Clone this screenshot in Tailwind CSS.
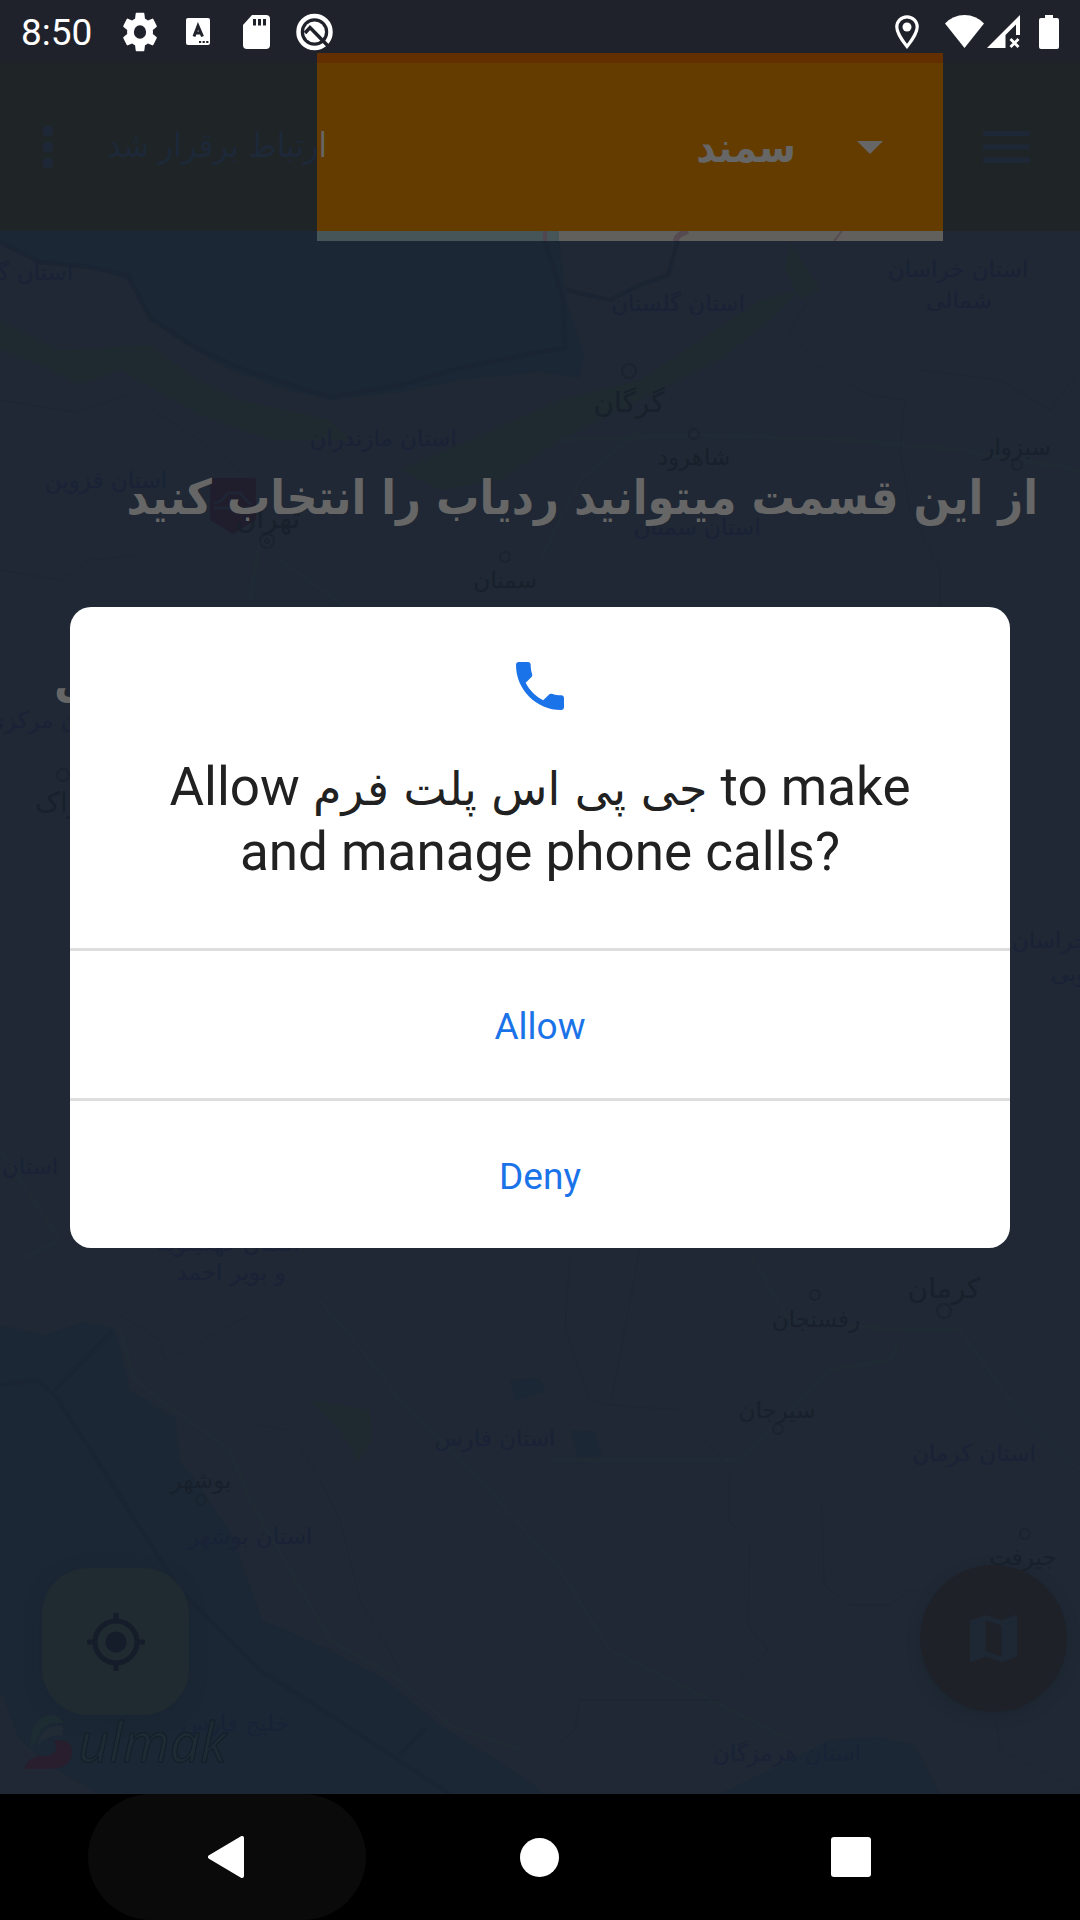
<!DOCTYPE html>
<html lang="fa">
<head>
<meta charset="utf-8">
<meta name="viewport" content="width=device-width, initial-scale=1">
<title>ردیاب</title>
<script src="https://cdn.jsdelivr.net/npm/@tailwindcss/browser@4"></script>
</head>
<body class="bg-black font-['Roboto','DejaVu_Sans',sans-serif]">
<div class="relative isolate flex min-h-screen flex-col overflow-hidden bg-[#1f2834]">

  <!-- Map -->
  <svg class="absolute inset-0 -z-10 h-full w-full" viewBox="0 0 1080 1920" preserveAspectRatio="xMidYMid slice" aria-hidden="true">
    <g fill="#1b2735">
      <path d="M0 231V242L40 262 95 268 128 280 150 320 190 347 230 370 280 388 330 400 400 392 460 380 540 372 580 378 584 355 566 300 558 231Z"/>
      <path d="M0 1325 45 1335 85 1322 115 1328 130 1390 175 1418 180 1460 230 1530 262 1620 330 1650 385 1680 440 1725 520 1775 545 1794H100L60 1772 20 1740 0 1690Z"/>
      <path d="M720 1794 760 1775 830 1740 880 1737 915 1745 940 1794Z"/>
      <path d="M570 1430 595 1432 602 1458 580 1465ZM510 1380 540 1378 545 1392 515 1400Z"/>
    </g>
    <g fill="#1e2930">
      <path d="M0 320 60 350 150 345 190 375 240 400 330 420 350 440 270 440 200 415 120 370 80 385 40 365 0 350Z"/>
      <path d="M400 470 470 440 560 400 640 380 700 340 760 300 800 290 770 320 720 360 640 400 560 440 500 480 440 490Z"/>
      <path d="M790 240 820 290 800 300 785 270ZM310 1400 370 1410 372 1440 358 1462 340 1430Z"/>
    </g>
    <g fill="none" stroke="#1a2432" stroke-width="4" stroke-linejoin="round">
      <path d="M0 242 40 262 90 267 128 275 150 318 200 350 250 372 330 397 400 385 460 368 540 352 565 348 563 300 542 231"/>
      <path d="M566 290 610 300 640 285 668 275 675 250 678 241"/>
      <path d="M0 1385 37 1380 55 1395 180 1590 260 1670 330 1715 450 1794M55 1390 112 1332M400 1755 425 1728"/>
    </g>
    <g fill="none" stroke="#202a35" stroke-width="5" stroke-linejoin="round">
      <path d="M120 1330 135 1380 180 1415 230 1450 250 1500 330 1640 400 1680 450 1725 520 1750"/>
      <path d="M320 1300 370 1360 400 1400 480 1480 560 1570 610 1650 690 1690 790 1740"/>
      <path d="M750 1255 790 1320 900 1330 960 1330 1010 1400 1080 1470M900 1340 890 1360 830 1370 770 1430 740 1460 550 1460"/>
      <path d="M560 440 700 435 850 440 960 450 1080 470M640 430 580 480 540 560"/>
      <path d="M260 540 250 600M280 560 350 610M0 1150 60 1240 20 1260"/>
    </g>
    <g fill="none" stroke="#1d2732" stroke-width="1">
      <path d="M0 400 75 412 130 395 200 440 240 470M0 570 60 580 90 560 140 555"/>
      <path d="M808 300 790 330 818 366 870 395 905 400 900 450 910 510 940 570 940 607M900 390 920 370 1000 380 1050 410 1080 370"/>
      <path d="M570 1255 565 1330 590 1400 610 1405 640 1250M610 1405 680 1410 730 1470 728 1520 750 1545 748 1625 768 1650 720 1700 580 1700 575 1730 550 1750"/>
      <path d="M120 1315 160 1340 165 1360 185 1350 250 1315M255 1425 290 1430 320 1480 340 1520 360 1600 400 1670"/>
      <path d="M822 1505 824 1585 850 1605 890 1605 910 1590 980 1600 1000 1750 1080 1790"/>
    </g>
    <g fill="none" stroke="#1a232e" stroke-width="2">
      <circle cx="267" cy="541" r="7"/><circle cx="267" cy="541" r="2"/>
      <circle cx="505" cy="557" r="5"/><circle cx="629" cy="371" r="7"/><circle cx="694" cy="434" r="5"/>
      <circle cx="1017" cy="465" r="5"/><circle cx="63" cy="775" r="6"/><circle cx="944" cy="1311" r="7"/>
      <circle cx="815" cy="1295" r="5"/><circle cx="778" cy="1429" r="5"/><circle cx="201" cy="1500" r="5"/><circle cx="1025" cy="1534" r="5"/>
    </g>
    <!-- Vehicle marker -->
    <path fill="#201d2d" d="M214 478H253Q256 478 256 481V520L247 525 233 534 219 525 210 520V481Q210 478 214 478Z"/>
    <path fill="none" stroke="#1e2534" stroke-width="3" d="M214 504 222 500 228 493H240L247 501 252 505M214 508H252"/>
    <g class="font-['DejaVu_Sans',sans-serif] text-[23px]" fill="#192236" text-anchor="middle" direction="rtl">
      <text x="17" y="280">استان گیلان</text>
      <text x="383" y="446">استان مازندران</text>
      <text x="106" y="488">استان قزوین</text>
      <text x="678" y="311">استان گلستان</text>
      <text x="958" y="277">استان خراسان</text>
      <text x="959" y="308">شمالی</text>
      <text x="697" y="535">استان سمنان</text>
      <text x="52" y="728">استان مرکزی</text>
      <text x="1050" y="948">خراسان</text>
      <text x="1080" y="981">جنوبی</text>
      <text x="30" y="1174">استان</text>
      <text x="228" y="1251">استان کهگیلویه</text>
      <text x="231" y="1280">و بویر احمد</text>
      <text x="974" y="1461">استان کرمان</text>
      <text x="495" y="1446">استان فارس</text>
      <text x="250" y="1544">استان بوشهر</text>
      <text x="235" y="1731">خلیج فارس</text>
      <text x="787" y="1761">استان هرمزگان</text>
    </g>
    <g class="font-['DejaVu_Sans',sans-serif] text-[23px]" fill="#17202b" text-anchor="middle" direction="rtl">
      <text class="text-[28px]" x="268" y="528">تهران</text>
      <text class="text-[28px]" x="629" y="412">گرگان</text>
      <text class="text-[28px]" x="944" y="1298">کرمان</text>
      <text x="505" y="588">سمنان</text>
      <text x="694" y="465">شاهرود</text>
      <text x="1017" y="455">سبزوار</text>
      <text class="text-[28px]" x="62" y="812">اراک</text>
      <text x="816" y="1327">رفسنجان</text>
      <text x="777" y="1418">سیرجان</text>
      <text x="201" y="1488">بوشهر</text>
      <text x="1023" y="1565">جیرفت</text>
    </g>
  </svg>

  <!-- Status bar -->
  <div class="flex h-[63px] shrink-0 items-center justify-between bg-[#1f222a] pr-[21px] pl-[21px] text-white" dir="ltr">
    <div class="flex items-center">
      <span class="w-[101px] pt-[2px] text-[37px] leading-[44px]">8:50</span>
      <svg class="h-[40px] w-[36px]" viewBox="2 2 20 20" preserveAspectRatio="none" fill="currentColor"><path d="M19.14 12.94a7.5 7.5 0 0 0 0-1.88l2.03-1.58a.5.5 0 0 0 .12-.61l-1.92-3.32a.49.49 0 0 0-.59-.22l-2.39.96a7 7 0 0 0-1.62-.94l-.36-2.54A.48.48 0 0 0 13.93 2.400h-3.84a.48.48 0 0 0-.48.41l-.36 2.540a7.200 7.200 0 0 0-1.620.94l-2.390-.96a.49.49 0 0 0-.59.22L2.740 8.870a.48.48 0 0 0 .12.610l2.030 1.580a7.500 7.500 0 0 0 0 1.880l-2.030 1.580a.5.5 0 0 0-.12.610l1.920 3.320c.12.22.37.29.59.22l2.390-.96c.5.380 1.030.7 1.620.94l.36 2.540c.05.240.24.410.48.410h3.840c.24 0 .44-.17.470-.410l.36-2.540a7 7 0 0 0 1.620-.94l2.390.96c.22.08.47 0 .59-.22l1.920-3.320a.5.5 0 0 0-.12-.61zM12 15.400a3.400 3.400 0 1 1 0-6.800 3.400 3.400 0 0 1 0 6.800z"/></svg>
      <svg class="ml-7 h-[28px] w-[25px]" viewBox="0 0 25 28"><rect width="24" height="27" rx="2" fill="#fff"/><path d="M8 18.500 12 8 16.500 18.500M9.500 15H15" fill="none" stroke="#1f222a" stroke-width="3"/><path d="M13 24H22.500" stroke="#1f222a" stroke-width="2.200" stroke-dasharray="2.200 1.400"/></svg>
      <svg class="ml-8 h-[34px] w-[27px]" viewBox="0 0 27 34"><path d="M9 0H23Q27 0 27 4V30Q27 34 23 34H4Q0 34 0 30V10Z" fill="#fff"/><path d="M11.500 4V10.500M16.500 4V10.500M21.500 4V10.500" stroke="#1f222a" stroke-width="3"/></svg>
      <svg class="ml-[26px] h-[38px] w-[37px]" viewBox="0 0 37 38"><circle cx="18.500" cy="19" r="16" fill="none" stroke="#fff" stroke-width="4.500"/><circle cx="18.500" cy="19" r="10.500" fill="#fff"/><path d="M9 20 14 14.500 35 36" fill="none" stroke="#1f222a" stroke-width="3.500"/></svg>
    </div>
    <div class="flex items-center">
      <svg class="h-[34px] w-[24px]" viewBox="0 0 24 34"><path d="M12 1.800C6 1.800 1.800 6.500 1.800 12 1.800 19 12 31.500 12 31.500S22.200 19 22.200 12C22.200 6.500 18 1.800 12 1.800Z" fill="none" stroke="#fff" stroke-width="3.200"/><circle cx="12" cy="12" r="4.500" fill="#fff"/></svg>
      <svg class="ml-[26px] h-[33px] w-[39px]" viewBox="0 0 39 33"><path d="M0 8.500Q8 0 19.500 0T39 8.500L19.500 33Z" fill="#fff"/></svg>
      <svg class="ml-[3px] h-[34px] w-[34px]" viewBox="0 0 34 34"><path d="M0 33 33 0V20H29V9.500L18.500 20V33Z" fill="#fff"/><path d="M23.500 24 31.500 32M31.500 24 23.500 32" stroke="#fff" stroke-width="2.800"/></svg>
      <svg class="ml-[18px] h-[34px] w-[20px]" viewBox="0 0 20 34"><path d="M6 0H14V3H18Q20 3 20 5V32Q20 34 18 34H2Q0 34 0 32V5Q0 3 2 3H6Z" fill="#fff"/></svg>
    </div>
  </div>

  <!-- App bar -->
  <header class="flex h-[168px] shrink-0 items-center bg-[#1f2427]" dir="ltr">
    <button type="button" aria-label="بیشتر" class="flex h-full w-[96px] items-center justify-center">
      <svg class="h-[44px] w-[12px]" viewBox="0 0 12 44" fill="#1d2736"><circle cx="6" cy="6" r="5.600"/><circle cx="6" cy="22" r="5.600"/><circle cx="6" cy="38" r="5.600"/></svg>
    </button>
    <p class="relative z-10 w-[231px] pb-1 font-['DejaVu_Sans_Condensed','DejaVu_Sans',sans-serif] text-[34px] leading-[44px] whitespace-nowrap text-[#1d2839]" dir="rtl"><span class="text-[#666]">ا</span>رتباط برقرار شد</p>
    <div class="relative -ml-[10px] h-full flex-1 bg-[#643c00]">
      <div class="absolute inset-x-0 bottom-full h-[10px] bg-[#632e00]"></div>
      <div class="absolute inset-x-0 top-full flex h-[10px]">
        <div class="w-[230px] border-r-4 border-[#51454f] bg-[#465558]"></div>
        <div class="relative flex-1 bg-[#62605c]">
          <svg class="h-full w-full" viewBox="0 0 396 10" preserveAspectRatio="none"><path d="M0 0H12V10H0Z" fill="#465558"/><path d="M129 10Q129 4 141 0" fill="none" stroke="#574b52" stroke-width="6"/><path d="M287 10 295 0" stroke="#574b52" stroke-width="2"/></svg>
        </div>
      </div>
      <select aria-label="ردیاب" dir="rtl" class="h-full w-full appearance-none bg-transparent pr-[147px] font-['DejaVu_Sans_Condensed','DejaVu_Sans',sans-serif] text-[42px] font-bold text-[#666] outline-none">
        <option>سمند</option>
      </select>
      <svg class="pointer-events-none absolute top-[78px] right-[60px] h-[13px] w-[26px]" viewBox="0 0 26 13" fill="#666"><path d="M0 0H26L13 13Z"/></svg>
    </div>
    <button type="button" aria-label="منو" class="flex h-full w-[137px] items-center pl-[40px]">
      <svg class="h-[32px] w-[47px]" viewBox="0 0 47 32" fill="#1d2736"><path d="M0 0H47V5.300H0ZM0 13.300H47V18.600H0ZM0 26.600H47V32H0Z"/></svg>
    </button>
  </header>

  <!-- Screen content -->
  <main class="flex flex-1 flex-col justify-between">
    <div class="flex flex-col gap-[112px] pt-[230px] pr-[42px] pl-[54px] font-['DejaVu_Sans_Condensed','DejaVu_Sans',sans-serif] text-[48px] leading-[72px] font-bold text-[#666]" dir="rtl">
      <h1 class="whitespace-nowrap">از این قسمت میتوانید ردیاب را انتخاب کنید</h1>
      <p class="text-left">ی</p>
    </div>
    <div>
      <div class="flex items-end justify-between pr-[13px] pl-[42px]" dir="ltr">
        <button type="button" aria-label="موقعیت من" class="grid size-[147px] place-items-center rounded-[46px] bg-[#202a31] shadow-[0_4px_14px_2px_#1b2533]">
          <svg class="size-[58px]" viewBox="0 0 58 58"><circle cx="29" cy="29" r="21" fill="none" stroke="#141d29" stroke-width="5"/><circle cx="29" cy="29" r="10.500" fill="#141d29"/><path d="M29 0V8M29 50V58M0 29H8M50 29H58" stroke="#141d29" stroke-width="5"/></svg>
        </button>
        <button type="button" aria-label="نقشه" class="mb-[3px] grid size-[147px] place-items-center rounded-full bg-[#1f2129] shadow-[0_4px_12px_#1c2630]">
          <svg class="size-[47px]" viewBox="3 3 18 18" fill="#1e2834"><path d="m20.500 3-.16.03L15 5.100 9 3 3.360 4.900a.5.5 0 0 0-.36.48V20.500c0 .28.220.5.500.5l.16-.03L9 18.900l6 2.100 5.640-1.900a.5.5 0 0 0 .36-.48V3.500a.5.5 0 0 0-.5-.5zM15 19l-6-2.110V5l6 2.110z"/></svg>
        </button>
      </div>
      <div class="flex h-[79px] items-start pl-[24px]" dir="ltr">
        <svg class="h-[54px] w-[212px]" viewBox="0 0 212 54" role="img" aria-label="Sulmak">
          <path d="M7 34C4 14 13-1 29 0Q38 2 39 9C28 5 15 12 13 25Z" fill="#1d2b32"/>
          <path d="M14 30C15 15 27 9 39 11L38 21C29 18 21 25 14 30Z" fill="#202b36"/>
          <path d="M0 54Q4 42 17 41C31 41 35 36 30 25Q49 24 48 38C46 57 25 54 0 54Z" fill="#291e2d"/>
          <text class="font-['Open_Sans',sans-serif] text-[54px] italic" x="54" y="47" fill="#1e2a34" stroke="#141e29" stroke-width="1">ulmak</text>
        </svg>
      </div>
    </div>
  </main>

  <!-- Permission dialog -->
  <div class="absolute inset-x-0 top-[61px] bottom-[126px] z-20 grid place-items-center px-[70px]" dir="ltr">
    <section role="dialog" aria-modal="true" aria-labelledby="perm-title" class="w-full overflow-hidden rounded-[21px] bg-white text-[#212121]">
      <div class="flex h-[341px] flex-col items-center pt-[55px] text-center">
        <svg class="size-[48px]" viewBox="3 3 18 18" fill="#1a73e8"><path d="M6.620 10.790c1.440 2.830 3.760 5.140 6.590 6.590l2.200-2.200a1 1 0 0 1 1.020-.24c1.120.37 2.330.57 3.570.57.550 0 1 .450 1 1V20c0 .550-.450 1-1 1-9.390 0-17-7.610-17-17 0-.550.450-1 1-1h3.500c.550 0 1 .450 1 1 0 1.250.2 2.450.57 3.570a1 1 0 0 1-.25 1.020z"/></svg>
        <h2 id="perm-title" class="mt-[45px] text-[53px] leading-[65px] whitespace-nowrap">Allow <bdi class="font-['DejaVu_Sans',sans-serif] text-[46px] leading-none" dir="rtl">جی پی اس پلت فرم</bdi> to make<br>and manage phone calls?</h2>
      </div>
      <button type="button" class="block h-[150px] w-full border-t-3 border-[#dedede] pt-1 text-[37px] text-[#1a73e8]">Allow</button>
      <button type="button" class="block h-[150px] w-full border-t-3 border-[#dedede] pt-1 text-[37px] text-[#1a73e8]">Deny</button>
    </section>
  </div>

  <!-- Navigation bar -->
  <nav class="flex h-[126px] shrink-0 justify-center gap-[34px] bg-black pr-[2px]" dir="ltr">
    <button type="button" aria-label="Back" class="grid h-full w-[278px] place-items-center rounded-[63px] bg-[#0a0a0a]">
      <svg class="h-[42px] w-[40px]" viewBox="0 0 40 42" fill="#fff" stroke="#fff" stroke-width="4" stroke-linejoin="round"><path d="M3 21 35 2V40Z"/></svg>
    </button>
    <button type="button" aria-label="Home" class="grid h-full w-[278px] place-items-center"><span class="size-[39px] rounded-full bg-white"></span></button>
    <button type="button" aria-label="Recents" class="grid h-full w-[278px] place-items-center"><span class="size-[40px] rounded-[3px] bg-white"></span></button>
  </nav>
</div>
</body>
</html>
